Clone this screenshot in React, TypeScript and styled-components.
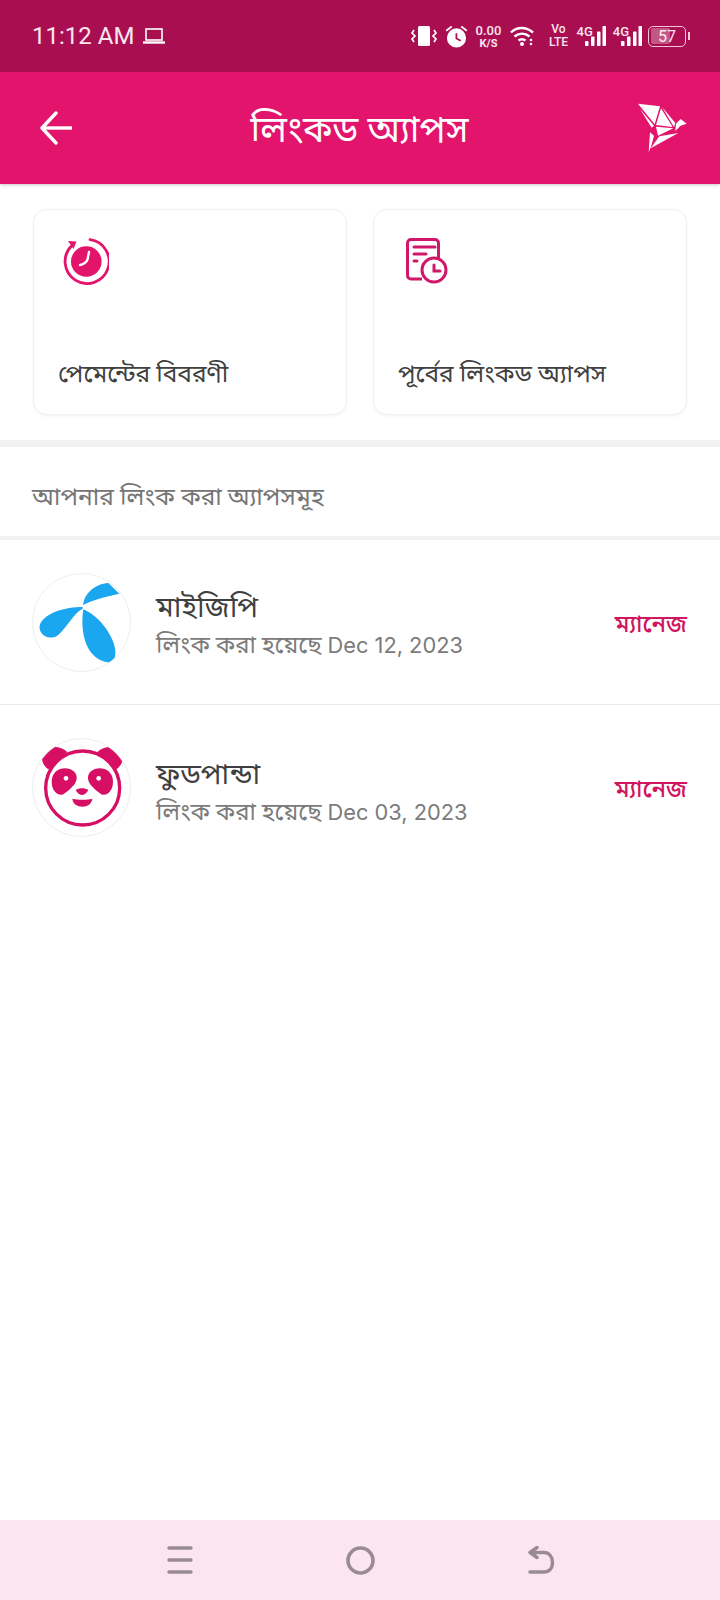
import type { FC } from "react";
import styled, { createGlobalStyle } from "styled-components";

const PINK = "#e3146c";
const FONT_STACK = `Roboto, "Noto Sans Bengali", "Noto Sans", "Liberation Sans", sans-serif`;

const GlobalStyle = createGlobalStyle`
  html, body {
    margin: 0;
    padding: 0;
    background: #fff;
  }
  * {
    box-sizing: border-box;
  }
`;

const Page = styled.div`
  width: 720px;
  height: 1600px;
  display: flex;
  flex-direction: column;
  font-family: ${FONT_STACK};
  background: #fff;
  overflow: hidden;
`;

const StatusBar = styled.div`
  height: 72px;
  flex: none;
  display: flex;
  align-items: center;
  justify-content: space-between;
  padding: 0 34px 0 32px;
  background: #a90f50;
  color: #fbe6f0;
`;

const StatusLeft = styled.div`
  display: flex;
  align-items: center;
  gap: 9px;
  font: 400 24px Roboto, sans-serif;
`;

const StatusRight = styled.div`
  display: flex;
  align-items: center;
  gap: 8px;
`;

const NetSpeed = styled.div`
  display: flex;
  flex-direction: column;
  align-items: center;
  width: 26px;
  font: 500 13px/14px Roboto, sans-serif;
`;

const NetUnit = styled.span`
  font-size: 11px;
  font-weight: 700;
  line-height: 11px;
`;

const VoLte = styled.div`
  display: flex;
  flex-direction: column;
  align-items: center;
  width: 20px;
  font: 500 12px/13px Roboto, sans-serif;
  margin-left: 6px;
`;

const SignalWrap = styled.div<{ $pull?: number }>`
  display: flex;
  align-items: flex-end;
  height: 20px;
  margin-left: ${({ $pull }) => $pull ?? 0}px;
`;

const SignalLabel = styled.span`
  font: 500 13px/11px Roboto, sans-serif;
  align-self: flex-start;
  margin-right: -8px;
`;

const Battery = styled.div`
  position: relative;
  width: 38px;
  height: 21px;
  margin-left: -2px;
  border: 1.5px solid #f3c7da;
  border-radius: 5px;
  display: flex;
  align-items: center;
  justify-content: center;
  font: 400 16px Roboto, sans-serif;
  &::before {
    content: "";
    position: absolute;
    left: 1.5px;
    top: 1.5px;
    bottom: 1.5px;
    width: 19px;
    border-radius: 2px;
    background: rgba(255, 255, 255, 0.3);
  }
  &::after {
    content: "";
    position: absolute;
    right: -4.5px;
    top: 5px;
    width: 2px;
    height: 8px;
    background: #f3c7da;
  }
`;

const AppBar = styled.header`
  height: 112px;
  flex: none;
  display: flex;
  align-items: center;
  justify-content: space-between;
  padding: 0 33px 0 39px;
  background: ${PINK};
  box-shadow: 0 1px 3px rgba(0, 0, 0, 0.22);
  position: relative;
`;

const AppTitle = styled.h1`
  margin: 8px 0 0 8px;
  font-size: 36.5px;
  font-weight: 400;
  color: #fff;
`;

const Cards = styled.div`
  display: flex;
  gap: 26px;
  padding: 25px 33px;
`;

const Card = styled.div`
  flex: 1;
  height: 206px;
  padding: 28px 24px 0;
  border-radius: 14px;
  background: #fff;
  border: 1px solid #f1f1f1;
  box-shadow: 0 1px 3px rgba(0, 0, 0, 0.05);
  display: flex;
  flex-direction: column;
  justify-content: space-between;
`;

const CardIcon = styled.div<{ $offset: number }>`
  display: flex;
  margin-left: ${({ $offset }) => $offset}px;
`;

const CardLabel = styled.div`
  font-size: 24.5px;
  line-height: 32px;
  color: #404040;
  margin-bottom: 24px;
`;

const ThickRule = styled.div<{ $height: number }>`
  height: ${({ $height }) => $height}px;
  flex: none;
  background: #f2f2f3;
`;

const SectionTitle = styled.div`
  height: 89px;
  padding: 14px 32px 0;
  display: flex;
  align-items: center;
  font-size: 24.5px;
  color: #757575;
`;

const Row = styled.div`
  height: 164px;
  display: flex;
  align-items: center;
  padding: 0 33px 0 32px;
  & + & {
    height: 165px;
    border-top: 1px solid #e9e9e9;
  }
`;

const Avatar = styled.div`
  width: 99px;
  height: 99px;
  flex: none;
  border-radius: 50%;
  border: 1px solid #eeeeee;
  overflow: hidden;
  svg {
    display: block;
  }
`;

const RowText = styled.div<{ $top: number }>`
  flex: 1;
  margin-left: 25px;
  padding-top: ${({ $top }) => $top}px;
  display: flex;
  flex-direction: column;
  gap: 4px;
`;

const RowName = styled.div`
  font-size: 29px;
  line-height: 36px;
  color: #3f3f3f;
`;

const RowSub = styled.div`
  font-size: 24px;
  line-height: 32px;
  color: #7b7b7b;
`;

const RowDate = styled.span`
  font-family: Inter, Roboto, sans-serif;
  font-size: 21.8px;
`;

const Manage = styled.div`
  padding-top: 8px;
  font-size: 24px;
  font-weight: 500;
  color: #d1165f;
`;

const Spacer = styled.div`
  flex: 1;
`;

const NavBar = styled.nav`
  height: 80px;
  flex: none;
  display: flex;
  align-items: center;
  justify-content: space-between;
  padding: 0 165px 0 167px;
  background: #fbe6f0;
`;

const BackIcon = () => (
  <svg width="34" height="34" viewBox="0 0 34 34" fill="none" stroke="#fff" strokeWidth="3.4" strokeLinejoin="round">
    <path d="M33 17H3" />
    <path d="M17 2 3 17l14 15" strokeLinecap="round" />
  </svg>
);

const BirdIcon = () => (
  <svg width="49" height="50" viewBox="24 24 147 150" fill="#fff">
    <path d="M24 26 90 34 74 88Z" />
    <path d="M30 42 72 92 65 98Z" />
    <path d="M93 40 128 96 78 90Z" />
    <path d="M96 36 136 84 132 96Z" />
    <path d="M138 86 152 72 170 86 152 92 136 108Z" />
    <path d="M78 95 130 100 84 122Z" />
    <path d="M88 124 145 114 62 160Z" />
    <path d="M60 112 72 122 64 152 56 172Z" />
  </svg>
);

const VibrateIcon = () => (
  <svg width="26" height="20" viewBox="0 0 26 20" fill="none" stroke="#fff" strokeWidth="1.7">
    <rect x="7" y="0" width="12" height="20" rx="1.500" fill="#fff" stroke="none" />
    <path d="M3 4 1 7l3 3-3 3 2 3M23 4l2 3-3 3 3 3-2 3" />
  </svg>
);

const AlarmIcon = () => (
  <svg width="23" height="23" viewBox="0 0 24 24" fill="#fff">
    <path fillRule="evenodd" d="M12 3.500a10 10 0 1 1 0 20 10 10 0 0 1 0-20Zm-1 5v6l5 2.600.8-1.400-4-2.100V8.500Z" />
    <path d="M6.500 .8 7.600 2.300 1.800 6.700 .7 5.200ZM17.500 .8 16.400 2.300 22.200 6.700 23.300 5.200Z" />
  </svg>
);

const WifiIcon = () => (
  <svg width="25" height="20" viewBox="0 0 25 20" fill="none" stroke="#fff" strokeWidth="2.400">
    <path d="M1 6.500C7 .5 16 .5 23 6.500M4.500 10.500c4.500-3.800 10.500-3.800 15 0M8.500 14.500c2.200-1.600 4.800-1.600 7 0" />
    <circle cx="12" cy="18" r="2" fill="#fff" stroke="none" />
    <circle cx="21" cy="14" r="1.300" fill="#fff" stroke="none" />
    <circle cx="21" cy="18" r="1.300" fill="#fff" stroke="none" />
  </svg>
);

const SignalBars = () => (
  <svg width="21" height="20" viewBox="0 0 21 20" fill="#fff">
    <rect x="0" y="15" width="3.500" height="5" rx="0.800" />
    <rect x="6" y="10.500" width="3.500" height="9.500" rx="0.800" />
    <rect x="12" y="5.500" width="3.500" height="14.500" rx="0.800" />
    <rect x="17.500" y="0" width="3.500" height="20" rx="0.800" />
  </svg>
);

const LaptopIcon = () => (
  <svg width="22" height="16" viewBox="0 0 22 16" fill="none" stroke="#fff">
    <rect x="3" y="1" width="16" height="11" strokeWidth="1.600" />
    <path d="M0 14.500h22" strokeWidth="2.400" />
  </svg>
);

const TimerIcon = () => (
  <svg width="46" height="47" viewBox="0 0 46 47" fill="none">
    <path d="M27 1.700A22 22 0 1 1 8.500 8" stroke={PINK} strokeWidth="2.800" strokeLinecap="round" />
    <path d="M5 3 13.500 3.500 10.500 11Z" fill={PINK} />
    <circle cx="23.300" cy="23.500" r="15.300" fill={PINK} />
    <path d="M26 14 24.500 21.500C24 24 20 26.500 17 27" stroke="#fff" strokeWidth="2.400" strokeLinecap="round" />
  </svg>
);

const HistoryIcon = () => (
  <svg width="42" height="46" viewBox="0 0 42 46" fill="none" stroke="#d0176a" strokeWidth="3">
    <path d="M16 41H5a3.500 3.500 0 0 1-3.500-3.500V5A3.500 3.500 0 0 1 5 1.500h24A3.500 3.500 0 0 1 32.500 5v15" />
    <path d="M8 9h21M8 16h12M8 23h3" strokeLinecap="round" />
    <circle cx="28" cy="32" r="12" fill="#fff" />
    <path d="M28 27v6h6" strokeLinecap="round" />
  </svg>
);

const TelenorLogo = () => (
  <svg width="97" height="97" viewBox="9 9 291 291" fill="#1ba6f0">
    <path d="M160 103C160 70 195 38 235 36L268 68C225 78 180 88 160 103Z" />
    <path d="M158 108C105 108 45 125 30 160 22 185 50 212 82 194 112 170 128 128 158 113Z" />
    <path d="M160 115C150 180 165 262 232 274 250 277 258 260 256 240 254 200 210 135 160 115Z" />
  </svg>
);

const PandaLogo = () => (
  <svg width="97" height="97" viewBox="9 9 291 291" fill="#d70f64">
    <path d="M55 100C30 82 32 55 48 42 65 28 92 30 112 48L80 80Z" />
    <path d="M259 100C284 82 282 55 266 42 249 28 222 30 202 48L234 80Z" />
    <circle cx="158" cy="156" r="111" fill="#fff" stroke="#d70f64" strokeWidth="10" />
    <path d="M65 138C65 110 85 97 105 97 125 97 142 110 140 128 138 145 120 160 100 175 85 182 65 165 65 138Z" />
    <path d="M249 138C249 110 229 97 209 97 189 97 172 110 174 128 176 145 194 160 214 175 229 182 249 165 249 138Z" />
    <circle cx="108" cy="127" r="7" fill="#fff" />
    <circle cx="206" cy="127" r="7" fill="#fff" />
    <path d="M137 162C147 155 165 155 175 162 170 172 162 177 156 177 150 177 142 172 137 162Z" />
    <path d="M127 188C145 192 170 192 187 188 186 203 172 212 157 212 142 212 128 203 127 188Z" />
  </svg>
);

const MenuIcon = () => (
  <svg width="26" height="28" viewBox="0 0 26 28" stroke="#9a8b93" strokeWidth="3.400" strokeLinecap="round">
    <path d="M2 2h22M2 14h22M2 26h22" />
  </svg>
);

const HomeIcon = () => (
  <svg width="29" height="29" viewBox="0 0 29 29" fill="none" stroke="#9a8b93" strokeWidth="3.600">
    <circle cx="14.500" cy="14.500" r="12.500" />
  </svg>
);

const ReturnIcon = () => (
  <svg width="28" height="28" viewBox="0 0 28 28" fill="none" stroke="#9a8b93" strokeWidth="3.400" strokeLinecap="round" strokeLinejoin="round">
    <path d="M3 6.500h14c5 0 8.500 4 8.500 10s-3.500 9.500-8.500 9.500H3M10 1.500 3 6.500l7 5" />
  </svg>
);

const apps = [
  { name: "মাইজিপি", date: "Dec 12, 2023", top: 6, logo: <TelenorLogo /> },
  { name: "ফুডপান্ডা", date: "Dec 03, 2023", top: 10, logo: <PandaLogo /> },
];

const App: FC = () => (
  <Page>
    <GlobalStyle />
    <StatusBar>
      <StatusLeft>
        11:12 AM
        <LaptopIcon />
      </StatusLeft>
      <StatusRight>
        <VibrateIcon />
        <AlarmIcon />
        <NetSpeed>
          0.00
          <NetUnit>K/S</NetUnit>
        </NetSpeed>
        <WifiIcon />
        <VoLte>
          Vo
          <span>LTE</span>
        </VoLte>
        <SignalWrap>
          <SignalLabel>4G</SignalLabel>
          <SignalBars />
        </SignalWrap>
        <SignalWrap $pull={-1}>
          <SignalLabel>4G</SignalLabel>
          <SignalBars />
        </SignalWrap>
        <Battery>57</Battery>
      </StatusRight>
    </StatusBar>
    <AppBar>
      <BackIcon />
      <AppTitle>লিংকড অ্যাপস</AppTitle>
      <BirdIcon />
    </AppBar>
    <Cards>
      <Card>
        <CardIcon $offset={5}>
          <TimerIcon />
        </CardIcon>
        <CardLabel>পেমেন্টের বিবরণী</CardLabel>
      </Card>
      <Card>
        <CardIcon $offset={8}>
          <HistoryIcon />
        </CardIcon>
        <CardLabel>পূর্বের লিংকড অ্যাপস</CardLabel>
      </Card>
    </Cards>
    <ThickRule $height={7} />
    <SectionTitle>আপনার লিংক করা অ্যাপসমূহ</SectionTitle>
    <ThickRule $height={4} />
    {apps.map((app) => (
      <Row key={app.name}>
        <Avatar>{app.logo}</Avatar>
        <RowText $top={app.top}>
          <RowName>{app.name}</RowName>
          <RowSub>
            লিংক করা হয়েছে <RowDate>{app.date}</RowDate>
          </RowSub>
        </RowText>
        <Manage>ম্যানেজ</Manage>
      </Row>
    ))}
    <Spacer />
    <NavBar>
      <MenuIcon />
      <HomeIcon />
      <ReturnIcon />
    </NavBar>
  </Page>
);

export default App;
